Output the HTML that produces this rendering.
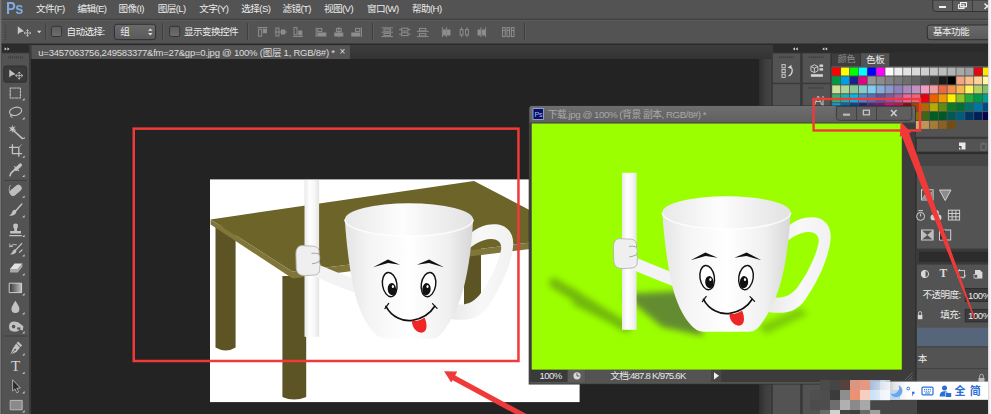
<!DOCTYPE html>
<html><head><meta charset="utf-8">
<style>
*{box-sizing:border-box;margin:0;padding:0}
html,body{width:991px;height:414px;overflow:hidden;background:#232323}
body{position:relative;font-family:"Liberation Sans","Noto Sans CJK SC",sans-serif;font-size:10px;color:#e6e6e6}
.a{position:absolute}
.t{position:absolute;white-space:nowrap;line-height:1}
svg{position:absolute;left:0;top:0}
.m{top:3.6px;font-size:9.6px;letter-spacing:-0.6px;color:#ececec}
.l{font-size:9.6px;letter-spacing:-0.6px;color:#ececec}
.o{top:27.2px;font-size:9.6px;letter-spacing:-0.6px;color:#ececec}
</style></head><body>
<!-- CHROME SHAPES -->
<svg width="991" height="414" viewBox="0 0 991 414">
<defs>
<linearGradient id="btn" x1="0" x2="0" y1="0" y2="1"><stop offset="0" stop-color="#6a6a6a"/><stop offset="1" stop-color="#5a5a5a"/></linearGradient>
<linearGradient id="sb" x1="0" x2="1" y1="0" y2="0"><stop offset="0" stop-color="#2e2e2e"/><stop offset="0.5" stop-color="#3e3e3e"/><stop offset="1" stop-color="#444"/></linearGradient>
<linearGradient id="ts" x1="0" x2="0" y1="0" y2="1"><stop offset="0" stop-color="#3d3d3d"/><stop offset="1" stop-color="#333"/></linearGradient>
<linearGradient id="cb" x1="0" x2="0" y1="0" y2="1"><stop offset="0" stop-color="#5c5c5c"/><stop offset="1" stop-color="#6e6e6e"/></linearGradient>
</defs>
<!-- menu bar -->
<rect x="0" y="0" width="991" height="19" fill="#535353"/>
<rect x="0" y="18.8" width="991" height="1" fill="#3b3b3b"/>
<!-- options bar -->
<rect x="0" y="19.8" width="991" height="24" fill="#535353"/>
<rect x="0" y="19.8" width="991" height="0.8" fill="#626262"/>
<rect x="0" y="43.7" width="991" height="1.4" fill="#2a2a2a"/>
<!-- tab strip -->
<rect x="0" y="45" width="991" height="14" fill="url(#ts)"/>
<rect x="31.5" y="45.2" width="318.5" height="13.8" fill="#535353"/>
<!-- canvas -->
<rect x="31" y="59" width="744" height="356" fill="#232323"/>
<rect x="759" y="59" width="12.4" height="356" fill="url(#sb)"/>
<!-- tools -->
<rect x="0" y="45" width="31" height="369" fill="#3a3a3a"/>
<rect x="2" y="45" width="27" height="7.5" fill="#2b2b2b"/>
<rect x="2" y="53.4" width="27" height="361" fill="#535353"/>
<rect x="0" y="0" width="1.3" height="414" fill="#747474"/>
<path d="M4.6,47.2 L6.8,48.9 L4.6,50.6 Z M7.4,47.2 L9.6,48.9 L7.4,50.6 Z" fill="#d0d0d0"/>
<path d="M8,57.4 H23" stroke="#3c3c3c" stroke-width="1.6" stroke-dasharray="1.2,0.8"/>
<rect x="3.8" y="66" width="22.8" height="16.2" rx="2" fill="#3a3a3a" stroke="#2c2c2c" stroke-width="0.8"/>
<path d="M4,180.4 H27 M4,336 H27" stroke="#3f3f3f" stroke-width="1"/>
<!-- options bar content -->
<path d="M5.5,24.5 V40" stroke="#3e3e3e" stroke-width="1.4" stroke-dasharray="1.2,1.2"/>
<path d="M17.8,26.3 L17.8,34.6 L20,32.4 L24,31.2 Z" fill="#c8c8c8"/>
<path d="M27.5,29.8 V36.2 M24.3,33 H30.7 M26.4,30.9 L27.5,29.6 L28.6,30.9 M26.4,35.1 L27.5,36.4 L28.6,35.1 M25.4,31.9 L24.1,33 L25.4,34.1 M29.6,31.9 L30.9,33 L29.6,34.1" stroke="#c8c8c8" stroke-width="0.8" fill="none"/>
<path d="M37,30.8 L41.4,30.8 L39.2,33.2 Z" fill="#d8d8d8"/>
<path d="M45.9,23 V40 M162.6,23 V40 M247.4,23 V40 M372.5,23 V40 M524.5,23 V40" stroke="#3c3c3c" stroke-width="1"/>
<path d="M46.9,23 V40 M163.6,23 V40 M248.4,23 V40 M373.5,23 V40 M525.5,23 V40" stroke="#5e5e5e" stroke-width="1"/>
<rect x="51.4" y="26.3" width="10.2" height="10.2" rx="1.8" fill="url(#cb)" stroke="#343434" stroke-width="1"/>
<rect x="169.6" y="26.3" width="10.2" height="10.2" rx="1.8" fill="url(#cb)" stroke="#343434" stroke-width="1"/>
<rect x="114.4" y="24.3" width="41.2" height="15.3" rx="2.5" fill="url(#btn)" stroke="#303030" stroke-width="1"/>
<path d="M148,30.8 L150.3,28.4 L152.6,30.8 Z M148,33 L150.3,35.4 L152.6,33 Z" fill="#e0e0e0"/>
<!-- window controls -->
<path d="M932.8,0 H991 V11.5 H936 Q932.8,11.5 932.8,8.5 Z" fill="#5d5d5d" stroke="#333" stroke-width="1"/>
<path d="M952.6,0 V11.5 M972.4,0 V11.5" stroke="#383838" stroke-width="1"/>
<rect x="939" y="6" width="7" height="2" fill="#f0f0f0"/>
<path d="M960.5,2.6 H966.5 V6.6 H960.5 Z M958.5,4.8 H964 V8.4 H958.5 Z" fill="#5d5d5d" stroke="#f0f0f0" stroke-width="1.1"/>
<path d="M984.5,3.5 L990,9 M990,3.5 L984.5,9" stroke="#f0f0f0" stroke-width="1.4"/>
<!-- workspace dropdown -->
<path d="M927.3,27.5 Q927.3,25 930,25 H991 V39.7 H930 Q927.3,39.7 927.3,37 Z" fill="url(#btn)" stroke="#303030" stroke-width="1"/>
</svg>
<!-- CHROME TEXT -->
<div class="t" style="left:6px;top:0.2px;font-size:17px;font-weight:bold;color:#7eaae0;letter-spacing:-0.6px;transform:scaleX(0.86);transform-origin:0 0">Ps</div>
<div class="t m" style="left:36.1px">文件(F)</div>
<div class="t m" style="left:77.4px">编辑(E)</div>
<div class="t m" style="left:118.6px">图像(I)</div>
<div class="t m" style="left:157.7px">图层(L)</div>
<div class="t m" style="left:199.3px">文字(Y)</div>
<div class="t m" style="left:241.3px">选择(S)</div>
<div class="t m" style="left:282.4px">滤镜(T)</div>
<div class="t m" style="left:324px">视图(V)</div>
<div class="t m" style="left:366.9px">窗口(W)</div>
<div class="t m" style="left:412px">帮助(H)</div>
<div class="t o" style="left:66.5px">自动选择:</div>
<div class="t o" style="left:120.2px">组</div>
<div class="t o" style="left:184px">显示变换控件</div>
<div class="t o" style="left:933px">基本功能</div>
<div class="t" id="tabt" style="left:38.3px;top:48.3px;color:#dcdcdc;font-size:9.5px;letter-spacing:-0.23px">u=3457063756,249583377&amp;fm=27&amp;gp=0.jpg @ 100% (图层 1, RGB/8#) *</div>
<div class="t" style="left:339.5px;top:47px;color:#dcdcdc;font-size:10px">×</div>
<!-- TOOL ICONS -->
<svg width="991" height="414" viewBox="0 0 991 414">
<defs><linearGradient id="gg" x1="0" x2="1"><stop offset="0" stop-color="#3a3a3a"/><stop offset="1" stop-color="#c2c2c2"/></linearGradient></defs>
<path d="M24.6,98.0 V100.4 H22.2 Z M24.6,117.0 V119.4 H22.2 Z M24.6,136.7 V139.1 H22.2 Z M24.6,155.4 V157.8 H22.2 Z M24.6,174.6 V177.0 H22.2 Z M24.6,195.4 V197.8 H22.2 Z M24.6,215.0 V217.4 H22.2 Z M24.6,234.6 V237.0 H22.2 Z M24.6,254.2 V256.6 H22.2 Z M24.6,273.0 V275.4 H22.2 Z M24.6,293.0 V295.4 H22.2 Z M24.6,312.0 V314.4 H22.2 Z M24.6,331.0 V333.4 H22.2 Z M24.6,353.0 V355.4 H22.2 Z M24.6,371.6 V374.0 H22.2 Z M24.6,391.0 V393.4 H22.2 Z M24.6,410.0 V412.4 H22.2 Z " fill="#c8c8c8"/>
<g fill="none" stroke="#c2c2c2" stroke-width="1.1" stroke-linecap="round" stroke-linejoin="round">
<path d="M9.3,69.4 L9.3,77.6 L11.5,75.5 L15.6,74.3 Z" fill="#c2c2c2" stroke="none"/>
<path d="M19.2,72.2 V79 M15.8,75.6 H22.6 M18.1,73.3 L19.2,72 L20.3,73.3 M18.1,77.9 L19.2,79.2 L20.3,77.9 M16.9,74.5 L15.6,75.6 L16.9,76.7 M21.5,74.5 L22.8,75.6 L21.5,76.7" stroke-width="0.8"/>
<rect x="10.2" y="88" width="10.2" height="10" stroke-dasharray="2,1.3" stroke-width="1.1"/>
<ellipse cx="15.6" cy="111.3" rx="6.2" ry="4" transform="rotate(-14 15.6 111.3)"/><path d="M11,114.2 Q10,116.5 12,117.2"/>
<path d="M14,131 L22.2,138.4" stroke-width="1.6"/><path d="M12.3,124.6 L12.9,127.3 L15.6,126.2 L14,128.6 L16.4,130.4 L13.5,130.4 L13,133.2 L11.8,130.6 L9,131.4 L10.8,129.2 L8.8,127.2 L11.5,127.4 Z" fill="#c2c2c2" stroke="none"/>
<path d="M12.4,144.6 V153.6 H21.6 M9.6,147.4 H18.8 V156.2" stroke-width="1.3"/><path d="M18.8,147.4 L21.4,144.8" stroke-width="0.8"/>
<path d="M10,175.8 L10.8,173.4 L16.6,167.6" stroke-width="1.6"/><path d="M16,169.4 L20.4,165" stroke-width="3.2"/><path d="M14.6,166.6 L18.6,170.6" stroke-width="1.2"/>
<rect x="9.2" y="187.4" width="13" height="6" rx="3" transform="rotate(-40 15.7 190.4)" fill="#bdbdbd" stroke="#c2c2c2" stroke-width="0.8"/><path d="M10.4,185.4 Q8.6,188 9.6,192.6" stroke-width="0.8" stroke-dasharray="1,0.8"/>
<path d="M21.8,204 L15.2,211.4" stroke-width="1.5"/><path d="M15.6,210 Q17.4,212.6 14.6,214.6 Q11.8,216.4 9.2,215.6 Q12.2,214 12.4,211.6 Q13.6,209.4 15.6,210 Z" fill="#c2c2c2" stroke="none"/>
<path d="M13.4,224.2 Q15.6,222.6 17.8,224.2 Q18.4,226.6 17,229 V231 H21 V233.6 H10.2 V231 H14.2 V229 Q12.8,226.6 13.4,224.2 Z" fill="#c2c2c2" stroke="none"/><path d="M9.8,235.6 H21.4" stroke-width="1.4"/>
<path d="M21.6,243.6 L15.4,250.4" stroke-width="1.4"/><path d="M15.8,249.4 Q17.2,251.8 14.8,253.4 Q12.4,255 10,254.4 Q12.6,253 12.8,251 Q14,249 15.8,249.4 Z" fill="#c2c2c2" stroke="none"/><path d="M10,246.6 Q12.6,243.4 16.4,244.6 M10,246.6 L9.8,244 M10,246.6 L12.6,246.4" stroke-width="0.9"/><path d="M19.4,252.4 L22,250" stroke-width="1.2"/>
<path d="M14.6,263.4 H22.4 L17.8,269 H10 Z" fill="#e2e2e2" stroke="none"/><path d="M10,269 H17.8 V272.4 H10 Z M17.8,269 L22.4,263.4 V266.8 L17.8,272.4 Z" fill="#a8a8a8" stroke="none"/>
<rect x="9.6" y="283.2" width="12" height="9.4" fill="url(#gg)" stroke="#d8d8d8" stroke-width="0.9"/>
<path d="M15.4,300.8 Q19.4,306.6 19.4,309 A4,4 0 0 1 11.4,309 Q11.4,306.6 15.4,300.8 Z" fill="#c2c2c2" stroke="none"/>
<path d="M9,326.6 Q9,321.4 14.6,321.4 Q18.6,321.4 20.4,324 L23.4,326.2 L22.8,330.4 L19.6,329.6 Q18.4,331.8 14.4,331.8 Q9,331.8 9,326.6 Z" fill="#c2c2c2" stroke="none"/><circle cx="13.6" cy="326.6" r="1.8" fill="#535353" stroke="none"/><path d="M17.2,327.4 H20.4 V329.6 H17.2 Z" fill="#535353" stroke="none"/>
<path d="M18.2,341.4 L22.2,345.4 L20.6,347 L16.6,343 Z" fill="#c2c2c2" stroke="none"/><path d="M16.2,343.6 L20,347.4 L16.4,352 L10.4,354.6 L13,348.2 Z" fill="#c2c2c2" stroke="none"/><path d="M10.6,354.4 L14.8,350" stroke="#535353" stroke-width="0.8"/><circle cx="15.2" cy="349.6" r="0.9" fill="#535353" stroke="none"/>
<path d="M12.6,380.2 L12.6,391 L15,388.8 L16.8,392.8 L18.6,392 L16.8,388.2 L20,388 Z" fill="#2a2a2a" stroke="#c2c2c2" stroke-width="0.8"/>
<rect x="10.6" y="400.4" width="11.6" height="9.4" fill="#8a8a8a" stroke="#c2c2c2" stroke-width="0.9"/>
</g>
<!-- align icons -->
<g fill="none" stroke="#8e8e8e" stroke-width="1">
<path d="M257.6,27.6 H267.6"/><rect x="258.6" y="29.2" width="3" height="7" /><rect x="263.4" y="29.2" width="3" height="3.6" fill="#8e8e8e"/>
<path d="M274.6,32 H287"/><rect x="276" y="28" width="3" height="8"/><rect x="281.4" y="30" width="3.4" height="4" fill="#8e8e8e"/>
<path d="M293,36.4 H303"/><rect x="294" y="27.6" width="3" height="7.2"/><rect x="298.8" y="31" width="3" height="3.8" fill="#8e8e8e"/>
<path d="M316.2,27.4 V37"/><rect x="317.8" y="28.4" width="4" height="3"/><rect x="317.8" y="33" width="8" height="3" fill="#8e8e8e"/>
<path d="M338.8,27.2 V37.2"/><rect x="336.4" y="28.4" width="4.8" height="3"/><rect x="334.8" y="33" width="8" height="3" fill="#8e8e8e"/>
<path d="M361.4,27.4 V37"/><rect x="355.6" y="28.4" width="4.2" height="3"/><rect x="351.8" y="33" width="8" height="3" fill="#8e8e8e"/>
<path d="M381.4,27.8 H393 M381.4,32.2 H393 M381.4,36.6 H393" stroke-width="0.9"/><rect x="384" y="29" width="6.4" height="2.2" fill="#535353"/><rect x="384" y="33.4" width="6.4" height="2.2" fill="#535353"/>
<path d="M399,29.6 H410.6 M399,34.2 H410.6" stroke-width="0.9"/><rect x="401.6" y="28.2" width="6.4" height="2.8" fill="#535353"/><rect x="401.6" y="32.8" width="6.4" height="2.8" fill="#535353"/>
<path d="M416.8,31.4 H428.6 M416.8,36.6 H428.6" stroke-width="0.9"/><rect x="419.4" y="28.4" width="6.4" height="2.4" fill="#535353"/><rect x="419.4" y="33.6" width="6.4" height="2.4" fill="#535353"/>
<path d="M442.4,27.2 V37.2 M446.6,27.2 V37.2" stroke-width="0.9"/><rect x="443.4" y="30" width="2.4" height="5" fill="#8e8e8e"/><rect x="447.6" y="30" width="2.4" height="5" fill="#8e8e8e"/>
<path d="M461.6,27.2 V37.2 M467,27.2 V37.2" stroke-width="0.9"/><rect x="460.2" y="29.6" width="2.8" height="5.4" fill="#535353"/><rect x="465.6" y="29.6" width="2.8" height="5.4" fill="#535353"/>
<path d="M481,27.2 V37.2 M485.6,27.2 V37.2" stroke-width="0.9"/><rect x="478" y="30" width="2.4" height="5" fill="#8e8e8e"/><rect x="482.6" y="30" width="2.4" height="5" fill="#8e8e8e"/>
<rect x="502.6" y="27.6" width="2.6" height="9"/><rect x="507" y="27.6" width="2.6" height="9"/><rect x="511.4" y="27.6" width="2.6" height="9"/><path d="M502.6,30.4 H505.2 M507,30.4 H509.6 M511.4,30.4 H514"/>
</g>
</svg>
<div class="t" style="left:11px;top:358.6px;font-size:15px;color:#d4d4d4;font-family:'Liberation Serif',serif">T</div>
<!-- RIGHT PANELS -->
<svg width="991" height="414" viewBox="0 0 991 414">
<rect x="771" y="45" width="220" height="369" fill="#3a3a3a"/>
<rect x="773" y="45" width="218" height="7.7" fill="#2b2b2b"/>
<path d="M795,47.2 L792.8,48.9 L795,50.6 Z M797.8,47.2 L795.6,48.9 L797.8,50.6 Z M824.4,47.2 L822.2,48.9 L824.4,50.6 Z M827.2,47.2 L825,48.9 L827.2,50.6 Z" fill="#d0d0d0"/>
<!-- icon columns -->
<rect x="773" y="53.5" width="27" height="29.2" fill="#535353"/>
<rect x="773" y="84.2" width="27" height="330" fill="#535353"/>
<rect x="802.8" y="53.5" width="27.4" height="29.2" fill="#535353"/>
<rect x="802.8" y="84.2" width="27.4" height="330" fill="#535353"/>
<path d="M779,57.3 H794 M808.8,57.3 H823.8 M808.8,88 H823.8" stroke="#3c3c3c" stroke-width="1.6" stroke-dasharray="1.2,0.8"/>
<!-- history icon -->
<g fill="none" stroke="#d4d4d4" stroke-width="0.9">
<rect x="782" y="64.6" width="3.2" height="3.2"/><rect x="782" y="69.4" width="3.2" height="3.2"/><rect x="782" y="74.2" width="3.2" height="3.2"/>
<path d="M788.5,76 C793,74 793.5,68 789.5,66.5" stroke-width="1.3"/>
</g>
<path d="M787.6,67.6 L791.6,64.8 L791,68.8 Z" fill="#d4d4d4"/>
<!-- 3d icon -->
<g fill="none" stroke="#d4d4d4" stroke-width="0.9">
<path d="M814.4,64.8 L817.9,66.5 L817.9,70.9 L814.4,72.6 L810.9,70.9 L810.9,66.5 Z M810.9,66.5 L814.4,68.2 L817.9,66.5 M814.4,68.2 V72.6"/>
</g>
<rect x="819.5" y="64.5" width="3.6" height="2.4" fill="#d4d4d4"/><rect x="819.5" y="68.2" width="3.6" height="2.4" fill="#d4d4d4"/>
<rect x="810.9" y="74.2" width="12" height="2.6" fill="#d4d4d4"/>
<!-- swatch panel -->
<rect x="831.4" y="52.6" width="160" height="13.6" fill="#2f2f2f"/>
<rect x="831.4" y="66" width="160" height="70.7" fill="#535353"/>
<rect x="832" y="53.6" width="28.4" height="12.4" fill="#3e3e3e"/>
<rect x="861" y="53.2" width="28.3" height="13" fill="#535353"/>
<rect x="917" y="139" width="74" height="12.8" fill="#535353"/>
<rect x="917" y="151.8" width="74" height="2.4" fill="#2e2e2e"/>
<rect x="917" y="154.2" width="74" height="11.8" fill="#464646"/>
<rect x="917" y="166" width="74" height="84" fill="#535353"/>
<rect x="917" y="262" width="74" height="152" fill="#535353"/>
<rect x="832.20" y="67.60" width="8.1" height="7.9" fill="#ff0000"/>
<rect x="841.07" y="67.60" width="8.1" height="7.9" fill="#ffff00"/>
<rect x="849.94" y="67.60" width="8.1" height="7.9" fill="#00ff00"/>
<rect x="858.81" y="67.60" width="8.1" height="7.9" fill="#00ffff"/>
<rect x="867.68" y="67.60" width="8.1" height="7.9" fill="#0000ff"/>
<rect x="876.55" y="67.60" width="8.1" height="7.9" fill="#ff00ff"/>
<rect x="885.42" y="67.60" width="8.1" height="7.9" fill="#ffffff"/>
<rect x="894.29" y="67.60" width="8.1" height="7.9" fill="#ededed"/>
<rect x="903.16" y="67.60" width="8.1" height="7.9" fill="#e3e3e3"/>
<rect x="912.03" y="67.60" width="8.1" height="7.9" fill="#dadada"/>
<rect x="920.90" y="67.60" width="8.1" height="7.9" fill="#d0d0d0"/>
<rect x="929.77" y="67.60" width="8.1" height="7.9" fill="#c6c6c6"/>
<rect x="938.64" y="67.60" width="8.1" height="7.9" fill="#bcbcbc"/>
<rect x="947.51" y="67.60" width="8.1" height="7.9" fill="#b3b3b3"/>
<rect x="956.38" y="67.60" width="8.1" height="7.9" fill="#a9a9a9"/>
<rect x="965.25" y="67.60" width="8.1" height="7.9" fill="#a0a0a0"/>
<rect x="974.12" y="67.60" width="8.1" height="7.9" fill="#e30613"/>
<rect x="982.99" y="67.60" width="8.1" height="7.9" fill="#ffe800"/>
<rect x="832.20" y="76.50" width="8.1" height="7.9" fill="#009944"/>
<rect x="841.07" y="76.50" width="8.1" height="7.9" fill="#00a0e9"/>
<rect x="849.94" y="76.50" width="8.1" height="7.9" fill="#1d2088"/>
<rect x="858.81" y="76.50" width="8.1" height="7.9" fill="#e4007f"/>
<rect x="867.68" y="76.50" width="8.1" height="7.9" fill="#969696"/>
<rect x="876.55" y="76.50" width="8.1" height="7.9" fill="#8c8c8c"/>
<rect x="885.42" y="76.50" width="8.1" height="7.9" fill="#828282"/>
<rect x="894.29" y="76.50" width="8.1" height="7.9" fill="#787878"/>
<rect x="903.16" y="76.50" width="8.1" height="7.9" fill="#6e6e6e"/>
<rect x="912.03" y="76.50" width="8.1" height="7.9" fill="#646464"/>
<rect x="920.90" y="76.50" width="8.1" height="7.9" fill="#505050"/>
<rect x="929.77" y="76.50" width="8.1" height="7.9" fill="#3c3c3c"/>
<rect x="938.64" y="76.50" width="8.1" height="7.9" fill="#1a1a1a"/>
<rect x="947.51" y="76.50" width="8.1" height="7.9" fill="#000000"/>
<rect x="956.38" y="76.50" width="8.1" height="7.9" fill="#f4a582"/>
<rect x="965.25" y="76.50" width="8.1" height="7.9" fill="#fbbf8a"/>
<rect x="974.12" y="76.50" width="8.1" height="7.9" fill="#fdd29a"/>
<rect x="982.99" y="76.50" width="8.1" height="7.9" fill="#fff9a8"/>
<rect x="832.20" y="85.40" width="8.1" height="7.9" fill="#cce198"/>
<rect x="841.07" y="85.40" width="8.1" height="7.9" fill="#acd598"/>
<rect x="849.94" y="85.40" width="8.1" height="7.9" fill="#89c997"/>
<rect x="858.81" y="85.40" width="8.1" height="7.9" fill="#84ccc9"/>
<rect x="867.68" y="85.40" width="8.1" height="7.9" fill="#7ecef4"/>
<rect x="876.55" y="85.40" width="8.1" height="7.9" fill="#88abda"/>
<rect x="885.42" y="85.40" width="8.1" height="7.9" fill="#8c97cb"/>
<rect x="894.29" y="85.40" width="8.1" height="7.9" fill="#8f82bc"/>
<rect x="903.16" y="85.40" width="8.1" height="7.9" fill="#aa89bd"/>
<rect x="912.03" y="85.40" width="8.1" height="7.9" fill="#c490bf"/>
<rect x="920.90" y="85.40" width="8.1" height="7.9" fill="#f19ec2"/>
<rect x="929.77" y="85.40" width="8.1" height="7.9" fill="#f29c9f"/>
<rect x="938.64" y="85.40" width="8.1" height="7.9" fill="#ec6941"/>
<rect x="947.51" y="85.40" width="8.1" height="7.9" fill="#f19149"/>
<rect x="956.38" y="85.40" width="8.1" height="7.9" fill="#f8b551"/>
<rect x="965.25" y="85.40" width="8.1" height="7.9" fill="#fff45c"/>
<rect x="974.12" y="85.40" width="8.1" height="7.9" fill="#b3d465"/>
<rect x="982.99" y="85.40" width="8.1" height="7.9" fill="#80c269"/>
<rect x="832.20" y="94.30" width="8.1" height="7.9" fill="#32b16c"/>
<rect x="841.07" y="94.30" width="8.1" height="7.9" fill="#13b5b1"/>
<rect x="849.94" y="94.30" width="8.1" height="7.9" fill="#00b7ee"/>
<rect x="858.81" y="94.30" width="8.1" height="7.9" fill="#448aca"/>
<rect x="867.68" y="94.30" width="8.1" height="7.9" fill="#556fb5"/>
<rect x="876.55" y="94.30" width="8.1" height="7.9" fill="#5f52a0"/>
<rect x="885.42" y="94.30" width="8.1" height="7.9" fill="#8957a1"/>
<rect x="894.29" y="94.30" width="8.1" height="7.9" fill="#ae5da1"/>
<rect x="903.16" y="94.30" width="8.1" height="7.9" fill="#ea68a2"/>
<rect x="912.03" y="94.30" width="8.1" height="7.9" fill="#eb6877"/>
<rect x="920.90" y="94.30" width="8.1" height="7.9" fill="#e60012"/>
<rect x="929.77" y="94.30" width="8.1" height="7.9" fill="#eb6100"/>
<rect x="938.64" y="94.30" width="8.1" height="7.9" fill="#f39800"/>
<rect x="947.51" y="94.30" width="8.1" height="7.9" fill="#fff100"/>
<rect x="956.38" y="94.30" width="8.1" height="7.9" fill="#8fc31f"/>
<rect x="965.25" y="94.30" width="8.1" height="7.9" fill="#22ac38"/>
<rect x="974.12" y="94.30" width="8.1" height="7.9" fill="#009944"/>
<rect x="982.99" y="94.30" width="8.1" height="7.9" fill="#009e96"/>
<rect x="832.20" y="103.20" width="8.1" height="7.9" fill="#00a0e9"/>
<rect x="841.07" y="103.20" width="8.1" height="7.9" fill="#0068b7"/>
<rect x="849.94" y="103.20" width="8.1" height="7.9" fill="#00479d"/>
<rect x="858.81" y="103.20" width="8.1" height="7.9" fill="#1d2088"/>
<rect x="867.68" y="103.20" width="8.1" height="7.9" fill="#601986"/>
<rect x="876.55" y="103.20" width="8.1" height="7.9" fill="#920783"/>
<rect x="885.42" y="103.20" width="8.1" height="7.9" fill="#e4007f"/>
<rect x="894.29" y="103.20" width="8.1" height="7.9" fill="#e5004f"/>
<rect x="903.16" y="103.20" width="8.1" height="7.9" fill="#a40000"/>
<rect x="912.03" y="103.20" width="8.1" height="7.9" fill="#a84200"/>
<rect x="920.90" y="103.20" width="8.1" height="7.9" fill="#ac6a00"/>
<rect x="929.77" y="103.20" width="8.1" height="7.9" fill="#b7aa00"/>
<rect x="938.64" y="103.20" width="8.1" height="7.9" fill="#638c0b"/>
<rect x="947.51" y="103.20" width="8.1" height="7.9" fill="#097c25"/>
<rect x="956.38" y="103.20" width="8.1" height="7.9" fill="#007130"/>
<rect x="965.25" y="103.20" width="8.1" height="7.9" fill="#00736d"/>
<rect x="974.12" y="103.20" width="8.1" height="7.9" fill="#0075a9"/>
<rect x="982.99" y="103.20" width="8.1" height="7.9" fill="#004986"/>
<rect x="832.20" y="112.10" width="8.1" height="7.9" fill="#0068b7"/>
<rect x="841.07" y="112.10" width="8.1" height="7.9" fill="#00479d"/>
<rect x="849.94" y="112.10" width="8.1" height="7.9" fill="#1d2088"/>
<rect x="858.81" y="112.10" width="8.1" height="7.9" fill="#440062"/>
<rect x="867.68" y="112.10" width="8.1" height="7.9" fill="#5f0058"/>
<rect x="876.55" y="112.10" width="8.1" height="7.9" fill="#8f0052"/>
<rect x="885.42" y="112.10" width="8.1" height="7.9" fill="#8e0020"/>
<rect x="894.29" y="112.10" width="8.1" height="7.9" fill="#6a0000"/>
<rect x="903.16" y="112.10" width="8.1" height="7.9" fill="#6a2a00"/>
<rect x="912.03" y="112.10" width="8.1" height="7.9" fill="#7d7400"/>
<rect x="920.90" y="112.10" width="8.1" height="7.9" fill="#406618"/>
<rect x="929.77" y="112.10" width="8.1" height="7.9" fill="#005e20"/>
<rect x="938.64" y="112.10" width="8.1" height="7.9" fill="#005826"/>
<rect x="947.51" y="112.10" width="8.1" height="7.9" fill="#005952"/>
<rect x="956.38" y="112.10" width="8.1" height="7.9" fill="#005b7f"/>
<rect x="965.25" y="112.10" width="8.1" height="7.9" fill="#003663"/>
<rect x="974.12" y="112.10" width="8.1" height="7.9" fill="#002157"/>
<rect x="982.99" y="112.10" width="8.1" height="7.9" fill="#0d004c"/>
<rect x="832.20" y="121.00" width="8.1" height="7.9" fill="#100040"/>
<rect x="841.07" y="121.00" width="8.1" height="7.9" fill="#300050"/>
<rect x="849.94" y="121.00" width="8.1" height="7.9" fill="#500050"/>
<rect x="858.81" y="121.00" width="8.1" height="7.9" fill="#600030"/>
<rect x="867.68" y="121.00" width="8.1" height="7.9" fill="#c8b090"/>
<rect x="876.55" y="121.00" width="8.1" height="7.9" fill="#a89070"/>
<rect x="885.42" y="121.00" width="8.1" height="7.9" fill="#806848"/>
<rect x="894.29" y="121.00" width="8.1" height="7.9" fill="#605030"/>
<rect x="903.16" y="121.00" width="8.1" height="7.9" fill="#e0c8a0"/>
<rect x="912.03" y="121.00" width="8.1" height="7.9" fill="#d4aa70"/>
<rect x="920.90" y="121.00" width="8.1" height="7.9" fill="#bf9456"/>
<rect x="929.77" y="121.00" width="8.1" height="7.9" fill="#a67c35"/>
<rect x="938.64" y="121.00" width="8.1" height="7.9" fill="#8c6020"/>
<rect x="947.51" y="121.00" width="8.1" height="7.9" fill="#754c10"/>
<!-- swatch bottom icons -->
<path d="M959,142.5 H965.5 V149.5 H961.5 V146 H959 Z" fill="#e8e8e8"/><path d="M959,147 L961,149.5 H959 Z" fill="#e8e8e8"/>
<path d="M980,144 H987 M981,145 V150 H986 V145 M982.6,143 H984.6" stroke="#777" stroke-width="1" fill="none"/>
<!-- adjustments icons -->
<g stroke="#d0d0d0" stroke-width="1" fill="none">
<rect x="921.5" y="189.8" width="11.6" height="10.2"/><path d="M922.5,198.6 L926,193.6 L928.4,196.4 L932,191.6" /><path d="M922,199.5 L926,193.6 L928.4,196.4 L932.6,191 V199.5 Z" fill="#999" stroke="none"/>
<path d="M939.5,190 L951,190 L945.2,200.6 Z" fill="#8c8c8c"/>
<circle cx="920.6" cy="216.4" r="4"/><path d="M918.4,210.6 H923 M920.6,216.4 V213.6"/>
<circle cx="933.4" cy="217.4" r="2.9" fill="#d0d0d0" stroke="none"/><circle cx="938.6" cy="217.4" r="2.9" fill="#d0d0d0" stroke="none"/><circle cx="936" cy="212.8" r="2.9" fill="#d0d0d0" stroke="none"/>
<rect x="948.4" y="210.2" width="11.2" height="9.8"/><path d="M948.4,213.5 H959.6 M948.4,216.8 H959.6 M952.1,210.2 V220 M955.9,210.2 V220"/>
<rect x="921.5" y="230" width="11.6" height="10"/><path d="M921.5,230 L927.3,235 L921.5,240 Z M933.1,230 L927.3,235 L933.1,240 Z" fill="#bdbdbd" stroke="none"/>
<rect x="939.5" y="230" width="11.2" height="10"/><rect x="940" y="230.5" width="5" height="9" fill="#2c2c2c" stroke="none"/>
</g>
<!-- layers panel -->
<rect x="917" y="248.6" width="74" height="16" fill="#3a3a3a"/>
<rect x="919" y="251.7" width="72" height="10.4" fill="#2c2c2c"/>
<rect x="917" y="327.6" width="74" height="18.8" fill="#56657a"/>
<rect x="917" y="346.4" width="74" height="0.9" fill="#3c3c3c"/>
<rect x="917" y="368.2" width="74" height="0.9" fill="#404040"/>
<rect x="965.2" y="288.5" width="26" height="13" fill="#3b3b3b" stroke="#2a2a2a" stroke-width="0.8"/>
<rect x="965.2" y="309.3" width="26" height="12.6" fill="#3b3b3b" stroke="#2a2a2a" stroke-width="0.8"/>
<g stroke="#d8d8d8" fill="none" stroke-width="1">
<circle cx="925" cy="274" r="3.6"/><path d="M925,270.4 A3.6,3.6 0 0 0 925,277.6 Z" fill="#d8d8d8"/>
<rect x="958" y="270.6" width="6.6" height="6.6" stroke-width="0.9"/><path d="M956.6,272 H958 M964.6,275.8 H966 M959.4,269.2 V270.6 M963.2,277.2 V278.6" stroke-width="0.9"/>
<path d="M975,270 H980 L982.4,272.4 V278.4 H975 Z" fill="#d8d8d8" stroke="none"/><rect x="974" y="274.6" width="3.6" height="3.4" fill="#535353" stroke="#d8d8d8" stroke-width="0.7"/>
<rect x="917.8" y="315" width="4.6" height="4.2" fill="#d8d8d8" stroke="none"/><path d="M918.6,315 V313 A1.5,1.5 0 0 1 921.6,313 V315" stroke-width="0.8"/>
<rect x="978.5" y="378" width="6" height="5.5" fill="#bbb" stroke="none"/><path d="M979.7,378 V376 A1.8,1.8 0 0 1 983.3,376 V378" stroke="#bbb" stroke-width="0.9"/>
</g>
</svg>
<div class="t" style="left:837.8px;top:55.4px;font-size:9px;letter-spacing:-0.3px;color:#8e8e8e">颜色</div>
<div class="t" style="left:866px;top:55px;font-size:9.6px;letter-spacing:-0.4px;color:#ececec">色板</div>
<div class="t" style="left:813.8px;top:93.6px;font-size:13px;color:#bdbdbd;letter-spacing:-1.2px">A|</div>
<div class="t" style="left:939.4px;top:268.4px;font-size:11.5px;color:#dcdcdc;font-family:'Liberation Serif',serif;font-weight:bold">T</div>
<div class="t l" style="left:922.6px;top:290.2px">不透明度:</div>
<div class="t l" style="left:968px;top:290.6px;letter-spacing:-0.4px">100%</div>
<div class="t l" style="left:940.2px;top:310.4px">填充:</div>
<div class="t l" style="left:968px;top:310.8px;letter-spacing:-0.4px">100%</div>
<div class="t l" style="left:917.8px;top:353.8px">本</div>

<!-- IMAGES -->
<svg width="991" height="414" viewBox="0 0 991 414">
<defs>
<linearGradient id="gb" x1="0" x2="1" y1="0" y2="0">
 <stop offset="0" stop-color="#e4e4e4"/><stop offset="0.18" stop-color="#f4f4f4"/><stop offset="0.5" stop-color="#ffffff"/><stop offset="0.8" stop-color="#f0f0f0"/><stop offset="1" stop-color="#d6d6d6"/>
</linearGradient>
<linearGradient id="gr" x1="0" x2="1" y1="0" y2="0">
 <stop offset="0" stop-color="#e8e8e8"/><stop offset="0.45" stop-color="#fdfdfd"/><stop offset="0.68" stop-color="#f1f1f1"/><stop offset="1" stop-color="#e2e2e2"/>
</linearGradient>
<linearGradient id="gh" x1="0" x2="1" y1="0" y2="0"><stop offset="0" stop-color="#e9e9e9"/><stop offset="0.5" stop-color="#f8f8f8"/><stop offset="1" stop-color="#f1f1f1"/></linearGradient>
<linearGradient id="gs" x1="0" x2="1" y1="0" y2="0">
 <stop offset="0" stop-color="#e9e9e9"/><stop offset="0.35" stop-color="#ffffff"/><stop offset="0.7" stop-color="#f6f6f6"/><stop offset="1" stop-color="#e4e4e4"/>
</linearGradient>
<filter id="bl3" x="-30%" y="-30%" width="160%" height="160%"><feGaussianBlur stdDeviation="3"/></filter>
<clipPath id="c1"><rect x="210" y="179.4" width="369.6" height="222.7"/></clipPath>
<clipPath id="c2"><rect x="531.7" y="123.5" width="370.1" height="246.1"/></clipPath>
</defs>
<!-- doc1 -->
<rect x="210" y="179.4" width="369.6" height="222.7" fill="#fff"/>
<g clip-path="url(#c1)">
 <!-- back legs -->
 <path d="M215.5,224 L235.6,232 L235.6,347.5 Q226,353.5 215.5,347.5 Z" fill="#5c5424"/>
 <rect x="464" y="245" width="17" height="62" fill="#5c5424"/>
 <path d="M282.4,276 H306.2 V397 Q294,402 282.4,397 Z" fill="#5c5424"/>
 <!-- top -->
 <path d="M210.6,219.4 L474,181 L585,239 L585,236 L292.4,271.6 Z" fill="#6d6429"/>
 <path d="M210.6,219.4 L292.4,271.6 L585,236 L585,242 L292.6,278.6 L210.6,224.4 Z" fill="#80763a"/>
 <g transform="translate(-317.5,7)">
 <!-- stick -->
 <rect x="622" y="172.8" width="14.6" height="157" fill="url(#gs)"/>
 <!-- arm -->
 <path d="M634,263.4 Q655,272.5 684,283.5" fill="none" stroke="#f3f3f3" stroke-width="12.5" stroke-linecap="round"/>
 <!-- handle -->
 <path d="M784,231 C791,221 803,216.5 813.5,217.2 C826,218 832,228 830.5,240 C829,256 819,280 805,300 C798,310 788,315 768,312 L772,297 C784,299.5 792,294 797,288 C808,273 816,256 818.5,243 C820,235 814,231.5 808,232 C800,232.5 793,236 784,244 Z" fill="url(#gh)"/>
 <!-- body -->
 <path d="M662.3,212 C664,240 668,268 672,285 C676,302 683,316 690,324 Q696,331.8 704,331.8 L749,331.8 Q757,331.8 762.5,322 C770,312 777,297 781.4,280 C786,262 789.4,238 790.6,212 Z" fill="url(#gb)"/>
 <ellipse cx="726.5" cy="212.6" rx="64.2" ry="16.4" fill="url(#gr)"/>
 <path d="M662.3,212.6 A64.2,16.4 0 0 0 790.7,212.6" fill="none" stroke="#fff" stroke-width="1.5" opacity="0.8"/>
 <!-- hand -->
 <path d="M619,238.6 Q613.4,239.4 613.4,247 L613.8,262 Q615,269 623,268.6 L632,268 Q637.6,267.4 637.2,261.4 Q638.2,257.6 636.6,254.4 Q638.2,250.4 636.4,247.2 Q637.6,240.4 631.6,239.2 Z" fill="#efefef" stroke="#b4b4b4" stroke-width="0.9"/>
 <path d="M629,246.4 Q633,245.6 636.4,247 M629.4,256.8 Q633,256.6 636.6,254.6" stroke="#9c9c9c" stroke-width="0.9" fill="none"/>
 <!-- face -->
 <ellipse cx="707.2" cy="277.6" rx="7.2" ry="12.2" fill="#fff" stroke="#111" stroke-width="1.4" transform="rotate(-9 707.2 277.6)"/>
 <ellipse cx="746" cy="277.6" rx="7.2" ry="12.2" fill="#fff" stroke="#111" stroke-width="1.4" transform="rotate(9 746 277.6)"/>
 <ellipse cx="709.4" cy="282.2" rx="4.2" ry="6.1" fill="#111" transform="rotate(-6 709.4 282.2)"/>
 <ellipse cx="744" cy="282.2" rx="4.2" ry="6.1" fill="#111" transform="rotate(6 744 282.2)"/>
 <ellipse cx="710.4" cy="279.6" rx="1.1" ry="1.5" fill="#fff"/><ellipse cx="745" cy="279.6" rx="1.1" ry="1.5" fill="#fff"/>
 <path d="M690.6,260.2 L705.4,252.4 L717.6,257.8 L705.6,256 Z" fill="#111"/>
 <path d="M734.4,257.8 L746.6,252.4 L761.4,260.2 L746.4,256 Z" fill="#111"/>
 <path d="M703.5,299.3 C709,310 721,315 730,313.4 C740,311.6 748,306 752.2,299.3" fill="none" stroke="#111" stroke-width="1.7" stroke-linecap="round"/>
 <path d="M702.4,301.6 L706.2,296.4 M750,296.6 L754.6,301.4" stroke="#111" stroke-width="1.2" stroke-linecap="round"/>
 <path d="M729.5,313.6 C729,319 733,326.2 740,325.6 C745.4,324.6 744.6,316 742,310.6 C738,313.6 733,314.6 729.5,313.6 Z" fill="#ee2626"/>
</g>
</g>
</svg>

<!-- FLOAT WINDOW -->
<svg width="991" height="414" viewBox="0 0 991 414">
<defs><linearGradient id="tb" x1="0" x2="0" y1="0" y2="1"><stop offset="0" stop-color="#6e6e6e"/><stop offset="0.1" stop-color="#565656"/><stop offset="1" stop-color="#515151"/></linearGradient></defs>
<path d="M528.7,384.5 V108.6 Q528.7,105.6 531.7,105.6 H912.8 Q915.8,105.6 915.8,108.6 V384.5 Z" fill="#2f2f2f"/>
<path d="M529.4,383.6 V108.4 Q529.4,106 531.8,106 H912.6 Q915,106 915,108.4 V383.6 Z" fill="url(#tb)"/>
<rect x="529.6" y="122.6" width="385.4" height="261" fill="#3c3c3c"/>
<rect x="529.6" y="382" width="385.4" height="1.6" fill="#555"/>
<!-- status bar -->
<rect x="531.7" y="369.6" width="35.9" height="12.4" fill="#3a3a3a"/>
<rect x="567.6" y="369.6" width="17.8" height="12.4" fill="#5c5c5c"/>
<rect x="585.4" y="369.6" width="126" height="12.4" fill="#535353"/>
<rect x="711.4" y="369.6" width="9.8" height="12.4" fill="#474747"/>
<path d="M714,372.2 L719,375.8 L714,379.4 Z" fill="#f0f0f0"/>
<circle cx="577" cy="375.8" r="3.6" fill="#d8d8d8"/><path d="M577,373.2 V376 H579.4" stroke="#5c5c5c" stroke-width="1" fill="none"/>
<!-- Ps icon -->
<rect x="533" y="108.6" width="10.6" height="10.8" fill="#0c0f60" stroke="#9ab8f0" stroke-width="0.8"/>
<!-- window buttons -->
<path d="M836.4,106.4 H911.8 V117.5 Q911.8,120.3 909,120.3 H839.2 Q836.4,120.3 836.4,117.5 Z" fill="#5e5e5e" stroke="#3a3a3a" stroke-width="0.9"/>
<path d="M856.5,106.4 V120.3 M876.5,106.4 V120.3" stroke="#3e3e3e" stroke-width="0.9"/>
<rect x="843" y="113.6" width="7" height="2.2" fill="#b8b8b8"/>
<rect x="863.4" y="110.2" width="6" height="4.6" fill="none" stroke="#c4c4c4" stroke-width="1.3"/>
<path d="M891,110 L896.6,116 M896.6,110 L891,116" stroke="#d0d0d0" stroke-width="1.4"/>
<!-- resize grip -->
<path d="M905,380 L912.5,372.5 M908,380 L912.5,375.5 M910.5,380 L912.5,378" stroke="#666" stroke-width="0.9"/>
</svg>
<div class="t" style="left:534.6px;top:110.6px;font-size:7.2px;color:#a4bcf4;letter-spacing:-0.3px">Ps</div>
<div class="t" id="ft" style="left:547.8px;top:109.6px;font-size:9.8px;letter-spacing:-0.5px;color:#a9a9a9">下载.jpg @ 100% (背景 副本, RGB/8#) *</div>
<div class="t l" style="left:539.5px;top:371.4px;color:#e8e8e8">100%</div>
<div class="t l" id="st" style="left:610.3px;top:371.2px;color:#e8e8e8;letter-spacing:-0.75px">文档:487.8 K/975.6K</div>
<svg width="991" height="414" viewBox="0 0 991 414">
<rect x="531.7" y="123.5" width="370.1" height="246.1" fill="#9bff00"/>
<g clip-path="url(#c2)">
 <g filter="url(#bl3)">
  <path d="M622,294 L682,291 L704,336 L662,327 L637,306 Z" fill="#5f8633" opacity="0.95"/>
 </g>
 <g filter="url(#bl3)" opacity="0.55" stroke="#4f7d12" fill="none" stroke-linecap="round">
  <path d="M554,283 L626,327" stroke-width="10"/>
  <path d="M571,292 L612,319" stroke-width="9"/>
  <path d="M576,302 L604,316" stroke-width="7"/>
 </g>
 <g filter="url(#bl3)" opacity="0.4">
  <path d="M758,326 L800,308 L808,314 L766,334 Z" fill="#4f7d12"/>
 </g>
 <g>
 <!-- stick -->
 <rect x="622" y="172.8" width="14.6" height="157" fill="url(#gs)"/>
 <!-- arm -->
 <path d="M634,263.4 Q655,272.5 684,283.5" fill="none" stroke="#f3f3f3" stroke-width="12.5" stroke-linecap="round"/>
 <!-- handle -->
 <path d="M784,231 C791,221 803,216.5 813.5,217.2 C826,218 832,228 830.5,240 C829,256 819,280 805,300 C798,310 788,315 768,312 L772,297 C784,299.5 792,294 797,288 C808,273 816,256 818.5,243 C820,235 814,231.5 808,232 C800,232.5 793,236 784,244 Z" fill="url(#gh)"/>
 <!-- body -->
 <path d="M662.3,212 C664,240 668,268 672,285 C676,302 683,316 690,324 Q696,331.8 704,331.8 L749,331.8 Q757,331.8 762.5,322 C770,312 777,297 781.4,280 C786,262 789.4,238 790.6,212 Z" fill="url(#gb)"/>
 <ellipse cx="726.5" cy="212.6" rx="64.2" ry="16.4" fill="url(#gr)"/>
 <path d="M662.3,212.6 A64.2,16.4 0 0 0 790.7,212.6" fill="none" stroke="#fff" stroke-width="1.5" opacity="0.8"/>
 <!-- hand -->
 <path d="M619,238.6 Q613.4,239.4 613.4,247 L613.8,262 Q615,269 623,268.6 L632,268 Q637.6,267.4 637.2,261.4 Q638.2,257.6 636.6,254.4 Q638.2,250.4 636.4,247.2 Q637.6,240.4 631.6,239.2 Z" fill="#efefef" stroke="#b4b4b4" stroke-width="0.9"/>
 <path d="M629,246.4 Q633,245.6 636.4,247 M629.4,256.8 Q633,256.6 636.6,254.6" stroke="#9c9c9c" stroke-width="0.9" fill="none"/>
 <!-- face -->
 <ellipse cx="707.2" cy="277.6" rx="7.2" ry="12.2" fill="#fff" stroke="#111" stroke-width="1.4" transform="rotate(-9 707.2 277.6)"/>
 <ellipse cx="746" cy="277.6" rx="7.2" ry="12.2" fill="#fff" stroke="#111" stroke-width="1.4" transform="rotate(9 746 277.6)"/>
 <ellipse cx="709.4" cy="282.2" rx="4.2" ry="6.1" fill="#111" transform="rotate(-6 709.4 282.2)"/>
 <ellipse cx="744" cy="282.2" rx="4.2" ry="6.1" fill="#111" transform="rotate(6 744 282.2)"/>
 <ellipse cx="710.4" cy="279.6" rx="1.1" ry="1.5" fill="#fff"/><ellipse cx="745" cy="279.6" rx="1.1" ry="1.5" fill="#fff"/>
 <path d="M690.6,260.2 L705.4,252.4 L717.6,257.8 L705.6,256 Z" fill="#111"/>
 <path d="M734.4,257.8 L746.6,252.4 L761.4,260.2 L746.4,256 Z" fill="#111"/>
 <path d="M703.5,299.3 C709,310 721,315 730,313.4 C740,311.6 748,306 752.2,299.3" fill="none" stroke="#111" stroke-width="1.7" stroke-linecap="round"/>
 <path d="M702.4,301.6 L706.2,296.4 M750,296.6 L754.6,301.4" stroke="#111" stroke-width="1.2" stroke-linecap="round"/>
 <path d="M729.5,313.6 C729,319 733,326.2 740,325.6 C745.4,324.6 744.6,316 742,310.6 C738,313.6 733,314.6 729.5,313.6 Z" fill="#ee2626"/>
</g>
</g>
</svg>

<!-- RED ANNOTATIONS -->
<svg width="991" height="414" viewBox="0 0 991 414">
<rect x="133.75" y="128.65" width="384.7" height="232.35" fill="none" stroke="#f03a3a" stroke-width="2.5"/>
<rect x="813.6" y="99" width="106.4" height="31.5" fill="none" stroke="#f03a3a" stroke-width="2.4"/>
<path d="M444.1,371.3 L457.2,371.6 L455.2,375.6 L532,417 L529.4,421.6 L452.6,380.2 L451.2,382.6 Z" fill="#f03a3a"/>
<path d="M900.7,121.6 L911,132.4 L909.2,133.2 L975.1,318.2 L973.9,318.7 L901.8,136 L899.8,136.8 Z" fill="#f03a3a"/>
</svg>
<!-- <rect x="830" y="379" width="10.2" height="10.2" fill="#3f3f3f"/>
<rect x="840" y="379" width="10.2" height="10.2" fill="#4a3d39"/>
<rect x="850" y="379" width="10.2" height="10.2" fill="#e0907a"/>
<rect x="860" y="379" width="10.2" height="10.2" fill="#e8957c"/>
<rect x="870" y="379" width="10.2" height="10.2" fill="#a9bfdc"/>
<rect x="880" y="379" width="10.2" height="10.2" fill="#dfe9f6"/>
<rect x="830" y="389" width="10.2" height="10.2" fill="#343434"/>
<rect x="840" y="389" width="10.2" height="10.2" fill="#8c8c8c"/>
<rect x="850" y="389" width="10.2" height="10.2" fill="#e98a6a"/>
<rect x="860" y="389" width="10.2" height="10.2" fill="#f5cabe"/>
<rect x="870" y="389" width="10.2" height="10.2" fill="#cfe0f5"/>
<rect x="880" y="389" width="10.2" height="10.2" fill="#dbe8f8"/>
<rect x="830" y="399" width="10.2" height="10.2" fill="#6a6a6a"/>
<rect x="840" y="399" width="10.2" height="10.2" fill="#b2b2b2"/>
<rect x="850" y="399" width="10.2" height="10.2" fill="#8a8a8a"/>
<rect x="860" y="399" width="10.2" height="10.2" fill="#adadad"/>
<rect x="870" y="399" width="10.2" height="10.2" fill="#2b2b2b"/>
<rect x="830" y="409" width="10.2" height="10.2" fill="#d0d0d0"/>
<rect x="840" y="409" width="10.2" height="10.2" fill="#3a3a3a"/>
<rect x="850" y="409" width="10.2" height="10.2" fill="#555555"/>
<rect x="860" y="409" width="10.2" height="10.2" fill="#9a9a9a"/>
<rect x="870" y="409" width="10.2" height="10.2" fill="#777777"/>
<rect x="820" y="399" width="10.2" height="10.2" fill="#5a5a5a"/><rect x="820" y="409" width="10.2" height="6" fill="#7a7a7a"/> + IME -->
<svg width="991" height="414" viewBox="0 0 991 414">
<defs>
<linearGradient id="ime" x1="0" x2="1" y1="0" y2="0"><stop offset="0" stop-color="#fff" stop-opacity="0"/><stop offset="0.2" stop-color="#fff" stop-opacity="0.85"/><stop offset="0.32" stop-color="#fff" stop-opacity="1"/><stop offset="1" stop-color="#fff"/></linearGradient>
<filter id="b2"><feGaussianBlur stdDeviation="0.6"/></filter>
</defs>
<rect x="917" y="400" width="74" height="14" fill="#2d2d2d"/>
<g filter="url(#b2)">
<rect x="831.4" y="384.5" width="85.6" height="30" fill="#464646"/>
<rect x="820" y="380" width="10.2" height="10.2" fill="#4c4c4c"/>
<rect x="830" y="380" width="10.2" height="10.2" fill="#444444"/>
<rect x="840" y="380" width="10.2" height="10.2" fill="#54433e"/>
<rect x="850" y="380" width="10.2" height="10.2" fill="#dc9580"/>
<rect x="860" y="380" width="10.2" height="10.2" fill="#e49a82"/>
<rect x="870" y="380" width="10.2" height="10.2" fill="#a8bcd8"/>
<rect x="880" y="380" width="10.2" height="10.2" fill="#c8d4e4"/>
<rect x="810" y="390" width="10.2" height="10.2" fill="#505050"/>
<rect x="820" y="390" width="10.2" height="10.2" fill="#4e4e4e"/>
<rect x="830" y="390" width="10.2" height="10.2" fill="#3a3a3a"/>
<rect x="840" y="390" width="10.2" height="10.2" fill="#8e8e8e"/>
<rect x="850" y="390" width="10.2" height="10.2" fill="#ec9272"/>
<rect x="860" y="390" width="10.2" height="10.2" fill="#f6cfc2"/>
<rect x="870" y="390" width="10.2" height="10.2" fill="#c8dff4"/>
<rect x="880" y="390" width="10.2" height="10.2" fill="#e4eefa"/>
<rect x="810" y="400" width="10.2" height="10.2" fill="#4c4c4c"/>
<rect x="820" y="400" width="10.2" height="10.2" fill="#4e4e4e"/>
<rect x="830" y="400" width="10.2" height="10.2" fill="#6e6e6e"/>
<rect x="840" y="400" width="10.2" height="10.2" fill="#b0b0b0"/>
<rect x="850" y="400" width="10.2" height="10.2" fill="#8a8a8a"/>
<rect x="860" y="400" width="10.2" height="10.2" fill="#a8a8a8"/>
<rect x="820" y="410" width="10.2" height="10.2" fill="#6a6a6a"/>
<rect x="830" y="410" width="10.2" height="10.2" fill="#d0d0d0"/>
<rect x="840" y="410" width="10.2" height="10.2" fill="#444444"/>
<rect x="850" y="410" width="10.2" height="10.2" fill="#404040"/>
<rect x="860" y="410" width="10.2" height="10.2" fill="#6a6a6a"/>
<rect x="870" y="410" width="10.2" height="10.2" fill="#a0a0a0"/>
</g>
<rect x="870" y="381.6" width="118" height="18.2" fill="url(#ime)"/>
<rect x="886" y="380.8" width="102" height="0.9" fill="#999" opacity="0.5"/>
<rect x="890" y="390" width="10" height="9.8" fill="#bcd6f3"/>
<g fill="#2b6fd6" stroke="none">
<path d="M898.6,385.2 A6.2,6.2 0 1 1 890.6,393.6 A6.4,6.4 0 0 0 898.6,385.2 Z" fill="#6aa6ec"/>
<circle cx="908.3" cy="388.5" r="1.4" fill="none" stroke="#2b6fd6" stroke-width="1"/>
<path d="M912,392.6 A1.3,1.3 0 1 1 913.4,394 Q913.3,395.6 911.8,396.4 Q912.8,395 912,392.6 Z"/>
<rect x="922" y="387.2" width="11" height="7.6" rx="1" fill="none" stroke="#2b6fd6" stroke-width="1.2"/>
<path d="M924,389.4 H931 M924,391.2 H931" stroke="#2b6fd6" stroke-width="0.9" stroke-dasharray="1.2,0.7"/><path d="M925,393 H930" stroke="#2b6fd6" stroke-width="0.9"/>
<circle cx="944.5" cy="388" r="2.5"/><path d="M939.6,396.6 Q939.6,391.2 944.5,391.2 Q947,391.2 948,392.4 H945 V396.6 Z"/>
<rect x="945.6" y="393" width="5.6" height="4" rx="0.6"/>
</g>
</svg>
<div class="t" style="left:954.6px;top:385.5px;font-size:11px;font-weight:bold;color:#2b6fd6">全</div>
<div class="t" style="left:969.8px;top:385.5px;font-size:11px;font-weight:bold;color:#2b6fd6">简</div>
<div class="a" style="left:988px;top:0;width:3px;height:414px;background:linear-gradient(90deg,#cfcfcf,#f6f6f6 60%)"></div>
</body></html>
